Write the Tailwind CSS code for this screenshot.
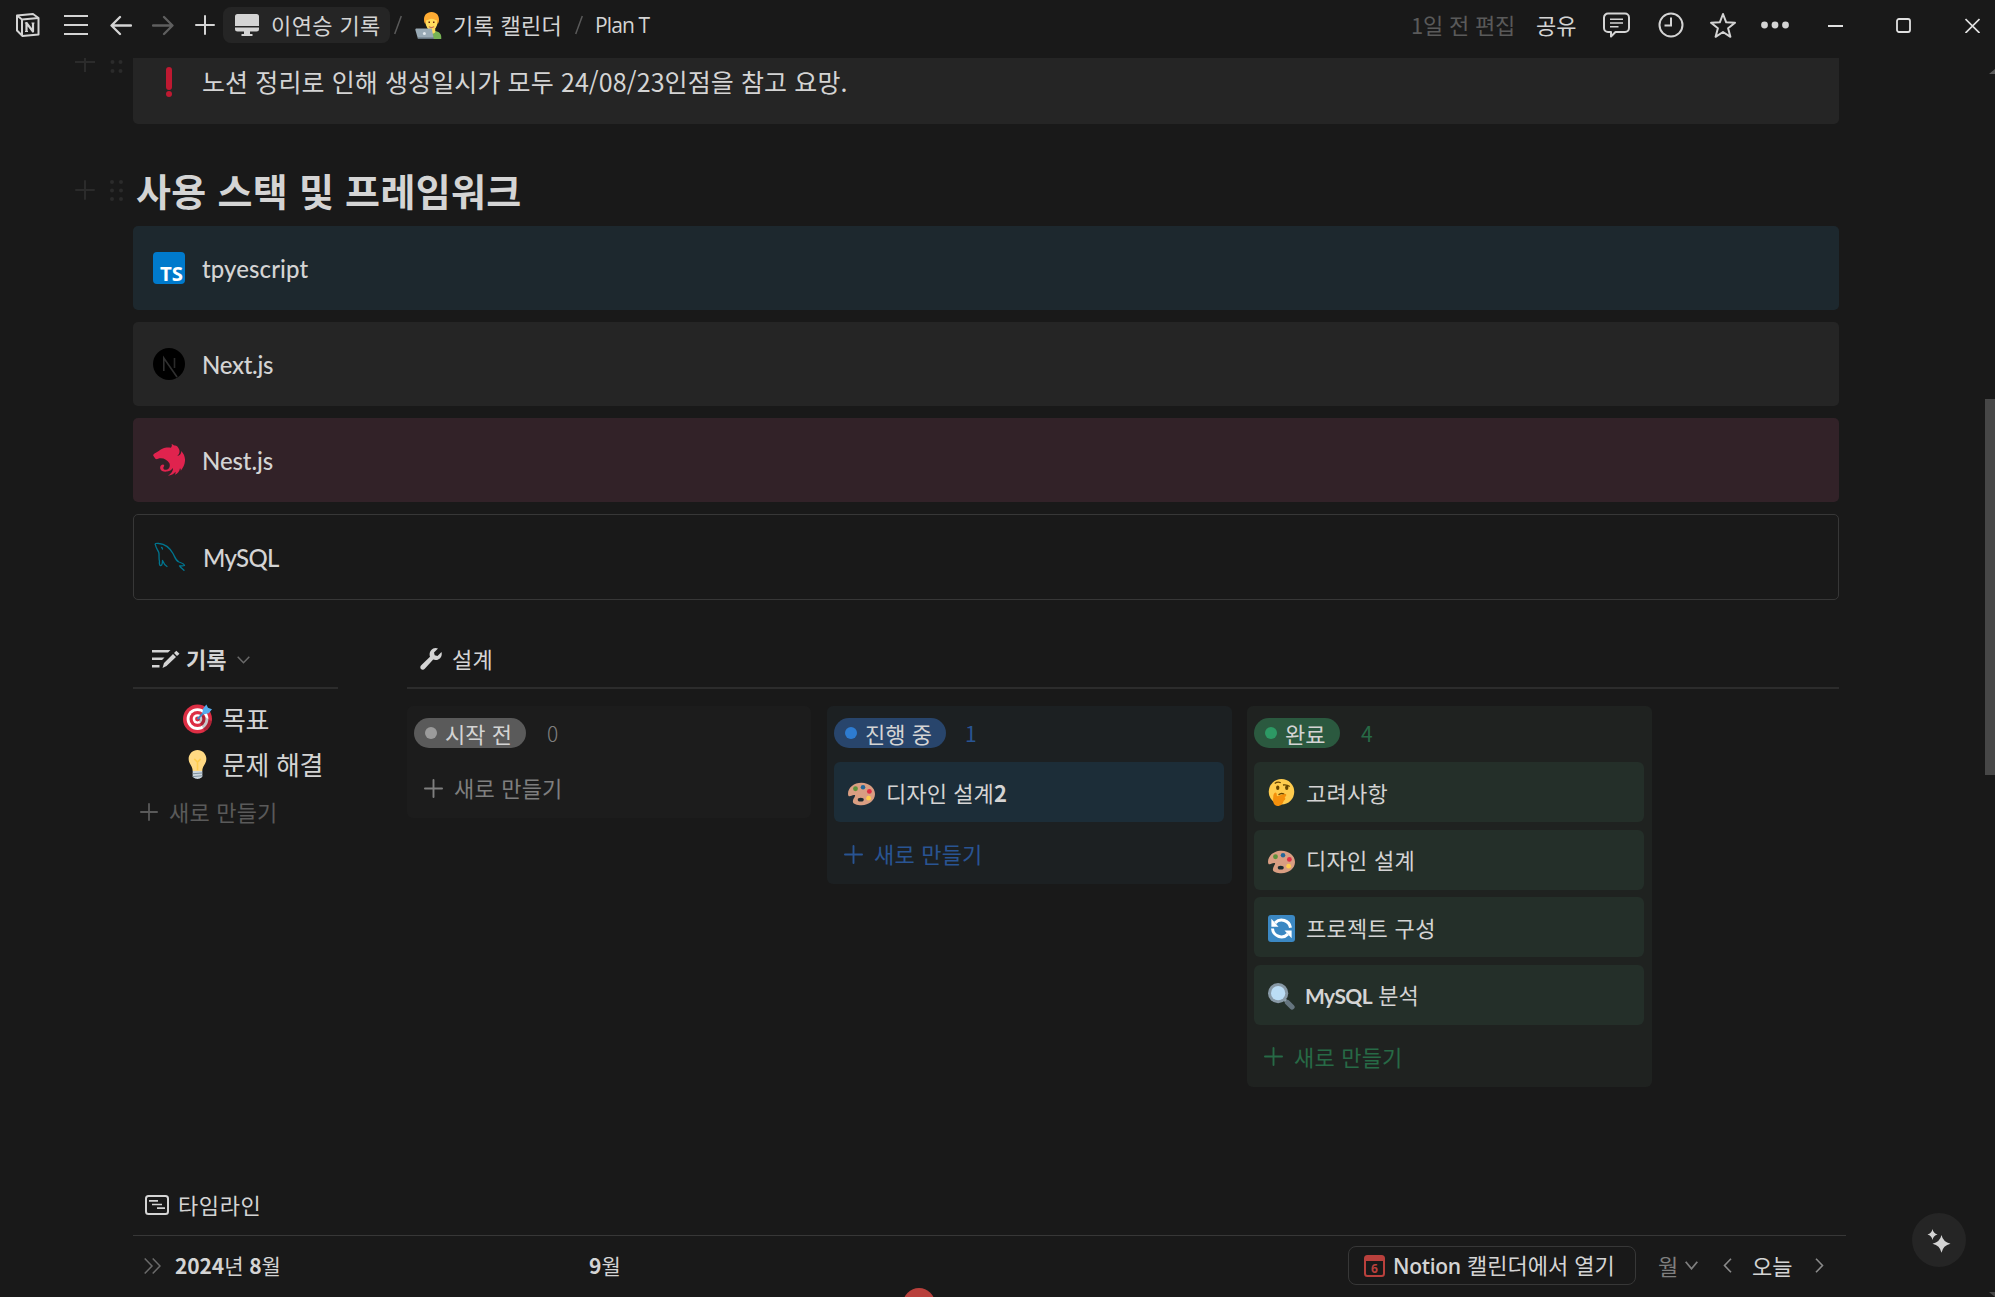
<!DOCTYPE html>
<html lang="ko">
<head>
<meta charset="utf-8">
<title>Plan T</title>
<script src="https://cdn.jsdelivr.net/npm/@tailwindcss/browser@4"></script>
</head>
<body class="relative h-[1297px] w-[1995px] overflow-hidden bg-[#191919] font-['Noto_Sans_CJK_KR',sans-serif] text-[22px] leading-none whitespace-nowrap text-[#d4d4d4]">
<svg class="hidden">
  <symbol id="plus" viewBox="0 0 20 20"><path d="M10 1v18M1 10h18" fill="none" stroke="currentColor" stroke-width="2" stroke-linecap="round"/></symbol>
  <symbol id="palette" viewBox="0 0 36 32"><path fill="#D99E82" d="M18 1C8 1 0 7.500 0 15.500c0 2 .8 3.500 2 3.500 2 0 4-2.200 7-1.600 2 .6-2.500 5-2.500 8.600C6.500 29.500 12 31 18 31c10 0 18-6.700 18-15S28 1 18 1z"/><ellipse cx="17" cy="23.500" rx="4" ry="2.600" fill="#1d2b2f"/><circle cx="10" cy="9" r="3.200" fill="#5C913B"/><circle cx="20" cy="7" r="3" fill="#226699"/><circle cx="28.500" cy="12.500" r="3.200" fill="#DD2E44"/><circle cx="27.500" cy="21.500" r="3.200" fill="#FFCC4D"/></symbol>
</svg>

<header class="flex h-[58px] items-start">
  <div class="flex h-[50px] w-full items-center">
    <svg class="ml-4 h-6 w-6" viewBox="0 0 24 24" fill="none" stroke="#d4d4d4" stroke-width="2" stroke-linejoin="round"><path d="M1 2.500L17 1l5.500 4v16.500L6.500 23 1 17.500z"/><path d="M1 2.500L6 6.500 22.500 5M6 6.500V22.500"/><path d="M10.500 18.500V10l6.500 8.500v-8.500" stroke-width="2.200"/><path d="M8.800 10h2.500M9 18.500h3M15.500 10h3" stroke-width="1.200"/></svg>
    <svg class="ml-6 h-6 w-6" viewBox="0 0 24 24" stroke="#d4d4d4" stroke-width="2"><path d="M0 3h24M0 12h24M0 21h24"/></svg>
    <svg class="ml-[22px] h-6 w-[22px]" viewBox="0 0 22 24" fill="none" stroke="#d4d4d4" stroke-width="2.300" stroke-linecap="round" stroke-linejoin="round"><path d="M10 4L1.500 12.500 10 21M2 12.500h19"/></svg>
    <svg class="ml-5 h-6 w-[22px]" viewBox="0 0 22 24" fill="none" stroke="#5f5f5f" stroke-width="2.300" stroke-linecap="round" stroke-linejoin="round"><path d="M12 4l8.500 8.500L12 21M20 12.500H1"/></svg>
    <svg class="ml-[21px] h-5 w-5"><use href="#plus" stroke-width="2.500"/></svg>
    <div class="ml-2 flex h-9 w-[167px] items-center rounded-lg bg-[#252525] pl-3">
      <svg class="h-6 w-6" viewBox="0 0 24 24" fill="#d4d4d4"><path d="M2.500 1h19A2.500 2.500 0 0124 3.500V13H0V3.500A2.500 2.500 0 012.500 1zM0 14.500h24v1.500a2.500 2.500 0 01-2.500 2.500H15V21h2.500v2h-11v-2H9v-2.500H2.500A2.500 2.500 0 010 16z"/></svg>
      <span class="ml-3 pb-0.5 tracking-[0.4px]">이연승 기록</span>
    </div>
    <svg class="ml-1 h-5 w-2" viewBox="0 0 8 20"><path d="M7.300 1L.7 19" stroke="#5a5a5a" stroke-width="1.500"/></svg>
    <svg class="ml-[13px] h-[27px] w-[27px]" viewBox="0 0 36 36"><path fill="#77B255" d="M14 36v-3c0-5 4-8 10-8s11 3 11 8v3z"/><path fill="#FFDC5D" d="M17 20h10v7c-3 3-7 3-10 0z"/><ellipse cx="22" cy="14" rx="8" ry="10" fill="#FFDC5D"/><path fill="#FFAC33" d="M22 0c-7 0-10 5-10 10 0 3 1 6 2 6l1-5c3 0 4-2 7-2s5 2 7 2l1 5c1 0 2-3 2-6 0-5-3-10-10-10z"/><path d="M19 12.500v2M25 12.500v2" stroke="#662113" stroke-width="2"/><path d="M18.500 19.500q3.500 2.500 7 0" fill="none" stroke="#C1694F" stroke-width="1.500"/><path fill="#99AAB5" d="M2 22h19c1 0 1.500.500 1.700 1.500L25 36H4L.5 24C.2 22.700 1 22 2 22z"/><path fill="#66757F" d="M4 34h21v2H4z"/><circle cx="12.500" cy="28.500" r="2" fill="#E1E8ED"/></svg>
    <span class="ml-[11px] w-[109px] pb-0.5 tracking-[0.3px]">기록 캘린더</span>
    <svg class="ml-[13px] h-5 w-2" viewBox="0 0 8 20"><path d="M7.300 1L.7 19" stroke="#5a5a5a" stroke-width="1.500"/></svg>
    <span class="ml-3 w-[60px] font-['Open_Sans',sans-serif] text-[21px] tracking-[-0.9px]">Plan T</span>
    <div class="ml-auto flex items-center">
      <span class="w-[102px] pb-0.5 tracking-[-0.2px] text-[#5a5a5a]">1일 전 편집</span>
      <span class="ml-[23px] w-[42px] pb-0.5">공유</span>
      <svg class="ml-[25px] h-[26px] w-[27px]" viewBox="0 0 27 26" fill="none" stroke="#d4d4d4" stroke-width="2"><path d="M5 1.500h17a4 4 0 014 4v10.500a4 4 0 01-4 4h-9.500L8 24.500V20H5a4 4 0 01-4-4V5.500a4 4 0 014-4z" stroke-linejoin="round"/><path d="M7 7.300h13M7 11h13M7 14.700h8.500" stroke-width="1.600"/></svg>
      <svg class="ml-[28px] h-[26px] w-[26px]" viewBox="0 0 26 26" fill="none" stroke="#d4d4d4" stroke-width="2"><circle cx="13" cy="13" r="11.500"/><path d="M13 5.500V13.500H6.500"/></svg>
      <svg class="ml-[25px] h-[27px] w-[28px]" viewBox="0 0 28 27" fill="none" stroke="#d4d4d4" stroke-width="2" stroke-linejoin="round"><path d="M14 2l3.200 8.300 8.800.5-6.900 5.500 2.300 8.500L14 20l-7.400 4.800 2.300-8.500L2 10.800l8.800-.5z"/></svg>
      <svg class="ml-6 h-7 w-7" viewBox="0 0 28 28" fill="#d4d4d4"><circle cx="3.500" cy="14" r="3.400"/><circle cx="14" cy="14" r="3.400"/><circle cx="24.500" cy="14" r="3.400"/></svg>
      <svg class="ml-[39px] h-4 w-[15px]" viewBox="0 0 15 16"><path d="M0 9h15" stroke="#e0e0e0" stroke-width="2"/></svg>
      <svg class="ml-[53px] h-4 w-[15px]" viewBox="0 0 15 16"><rect x="1" y="2" width="13" height="13" rx="2" fill="none" stroke="#e0e0e0" stroke-width="1.800"/></svg>
      <svg class="mr-[15px] ml-[54px] h-4 w-[15px]" viewBox="0 0 15 16"><path d="M.5 2l14 14M14.500 2L.5 16" stroke="#e0e0e0" stroke-width="1.700"/></svg>
    </div>
  </div>
</header>

<main class="flex">
  <aside class="w-[133px] shrink-0 text-[#2b2b2b]">
    <div class="flex h-[18px] items-start overflow-hidden pl-[75px]">
      <svg class="h-[15px] w-5" viewBox="0 0 20 15"><path d="M10 0v14M0 4h20" stroke="currentColor" stroke-width="2"/></svg>
      <svg class="ml-[15px] h-[15px] w-[14px]" viewBox="0 0 14 15" fill="currentColor"><circle cx="2.500" cy="4" r="2"/><circle cx="10.500" cy="4" r="2"/><circle cx="2.500" cy="13" r="2"/><circle cx="10.500" cy="13" r="2"/></svg>
    </div>
    <div class="mt-[104px] flex pl-[75px]">
      <svg class="h-5 w-5"><use href="#plus"/></svg>
      <svg class="ml-[15px] h-[22px] w-[14px]" viewBox="0 0 14 22" fill="currentColor"><circle cx="2" cy="2" r="2"/><circle cx="11" cy="2" r="2"/><circle cx="2" cy="10.500" r="2"/><circle cx="11" cy="10.500" r="2"/><circle cx="2" cy="19" r="2"/><circle cx="11" cy="19" r="2"/></svg>
    </div>
  </aside>

  <div class="w-[1713px]">
    <div class="w-[1706px]">
      <div class="flex h-[66px] rounded-b-[5px] bg-[#252525] pt-[9px] pl-5">
        <svg class="h-8 w-8" viewBox="0 0 32 32" fill="#BE1931"><rect x="13" y="0" width="6" height="23" rx="3"/><circle cx="16" cy="27" r="3"/></svg>
        <span class="ml-[17px] pt-0.5 text-[25px] tracking-[0.1px]">노션 정리로 인해 생성일시가 모두 24/08/23인점을 참고 요망.</span>
      </div>
      <h2 class="mt-[47px] h-[55px] pl-[3px] text-[38px] font-bold tracking-[0.3px]">사용 스택 및 프레임워크</h2>

      <div class="flex flex-col gap-3 font-['Lato',sans-serif] text-[24px] font-medium">
        <div class="flex h-[84px] items-center rounded-[5px] bg-[#1d282e] pl-5">
          <svg class="h-8 w-8" viewBox="0 0 32 32"><rect width="32" height="32" rx="4" fill="#007ACC"/><text x="7" y="28.500" font-family="Open Sans" font-weight="700" font-size="19" textLength="23" lengthAdjust="spacingAndGlyphs" fill="#fff">TS</text></svg>
          <span class="ml-[17px] pt-0.5 tracking-[0.1px]">tpyescript</span>
        </div>
        <div class="flex h-[84px] items-center rounded-[5px] bg-[#252525] pl-5">
          <svg class="h-8 w-8" viewBox="0 0 32 32"><circle cx="16" cy="16" r="16" fill="#000"/><path d="M10.800 23V10L24 29" fill="none" stroke="#303030" stroke-width="1.600"/><path d="M21.500 10v10" stroke="#2a2a2a" stroke-width="1.600"/></svg>
          <span class="ml-[17px] pt-0.5 tracking-[-0.3px]">Next.js</span>
        </div>
        <div class="flex h-[84px] items-center rounded-[5px] bg-[#322228] pl-5">
          <svg class="h-8 w-8" viewBox="0 0 32 32" fill="#E0234E"><path d="M18.500 0c.8 1.300.3 2.500-.6 3.800-2.500-.4-5.500-.5-8 .8C7 5.800 4.500 8.300 1.500 9.500-.2 10.500 0 12 .9 12.600c.7.800.8 1.800 2 2.400 1.200.5 2.500-.5 3.500-.7 4-.7 8 1.500 10 5 1 3 0 6-3 6.500-2.500.2-4-1.500-2.500-3.400.6-.7.300-1.700-.7-1.900-2.200 0-3.400 2-3 4 .6 2.700 4 3.500 6.800 3 3-.4 5-2 6-3.500.3 3-2 6-5 7.700 3-.2 6-2 7.500-4 .2 1 0 2-.5 3 2.500-1 4.500-3.500 5-6.500.7.500.8 1.500.8 2.500 2.500-3 4.500-7 4.200-11.500C31.800 12 30.500 9.500 28.300 7c.1 2.800-1.500 4.800-4.300 5 2-1.300 3-3.500 2.300-6.200C25.200 2.500 23.200 1.200 21.500 1.500c-1 0-1.800-1.200-3-1.500z"/></svg>
          <span class="ml-[17px] pt-0.5 tracking-[-0.1px]">Nest.js</span>
        </div>
        <div class="flex h-[86px] items-center rounded-[5px] border border-[#373737] pl-5">
          <svg class="h-8 w-8" viewBox="0 0 32 32" fill="none" stroke="#00758F" stroke-width="1.300" stroke-linejoin="round" stroke-linecap="round"><path d="M5.500 20.500C5 23 6 25 7 24.500s1.500-3 1.500-5c1 2.500 2 4.500 4.500 6M5.500 20.500c-1-3 0-6-.7-9C4 9 2 7.500 1.500 4 .5 2.500 2 2 5 2.500c6 .500 10.500 4 14 10 2 3.500 2.500 7 6 8.500 3 1 5 2 5.500 3.500-1 .6-3 .2-5 .3 1 1.700 2.500 2.700 4.500 4.500"/><path d="M7.500 6.500q1 .200 1 1.500"/></svg>
          <span class="ml-[17px] pt-0.5 tracking-[-0.7px]">MySQL</span>
        </div>
      </div>

      <div class="mt-11 flex h-[535px] justify-between">
        <section class="w-[205px]">
          <div class="flex h-[45px] items-start border-b-2 border-[#2c2c2c] pl-[19px]">
            <svg class="mt-1.5 h-[19px] w-7" viewBox="0 0 28 19" fill="#d4d4d4"><path d="M0 0h18.500l-2.500 2.500H0zM0 7.500h12.500L10 10H0zM0 15h7.500v2.500H0zM10.500 18l1.500-5L21 4l3 3-9.500 9zM22 3l2.300-2.300L27.500 3.800 25 6z"/></svg>
            <span class="mt-[3px] ml-1.5 font-bold">기록</span>
            <svg class="mt-3 ml-[11px] h-2 w-[13px]" viewBox="0 0 13 8"><path d="M.7.7l5.800 6 5.800-6" fill="none" stroke="#6a6a6a" stroke-width="1.500"/></svg>
          </div>
          <div class="flex h-[46px] items-center pt-1.5 pl-[50px]">
            <svg class="mt-2 h-[30px] w-[29px]" viewBox="0 0 36 36"><circle cx="18" cy="18" r="18" fill="#DD2E44"/><circle cx="18" cy="18" r="13.500" fill="#fff"/><circle cx="18" cy="18" r="10" fill="#DD2E44"/><circle cx="18" cy="18" r="6" fill="#fff"/><circle cx="18" cy="18" r="3" fill="#DD2E44"/><path d="M19 19l8 14a18 18 0 009-12L24 13z" fill="#000" opacity=".22"/><path d="M18 18l11-11" stroke="#3B88C3" stroke-width="2.500"/><path d="M24 11l1-6 4-5 2 4 5 2-4 5-6 1z" fill="#55ACEE"/></svg>
            <span class="mt-[7px] ml-[10px] text-[26px] tracking-[-0.3px]">목표</span>
          </div>
          <div class="flex h-[46px] items-center pt-1.5 pl-[50px]">
            <svg class="mt-[7px] h-[29px] w-[29px]" viewBox="0 0 36 36"><path fill="#FFD983" d="M29 11c0 7-5 8-5 15H12c0-7-5-8-5-15C7 5 12 0 18 0s11 5 11 11z"/><path d="M14 11l4 4 4-4M18 15v10" fill="none" stroke="#FFCC4D" stroke-width="2"/><path fill="#CCD6DD" d="M12 26h12v7c0 1-3 3-6 3s-6-2-6-3z"/><path d="M12 29.500l12-1M12 33l12-1" stroke="#7b8d9a" stroke-width="1.200"/></svg>
            <span class="mt-1.5 ml-[10px] text-[26px] tracking-[-0.4px]">문제 해결</span>
          </div>
          <div class="flex items-center pt-[19px] pl-[7px] text-[#5a5a5a]">
            <svg class="h-[18px] w-[18px]"><use href="#plus"/></svg><span class="ml-[11px] pb-0.5 tracking-[0.2px]">새로 만들기</span>
          </div>
        </section>

        <section class="w-[1432px]">
          <div class="flex h-[45px] items-start border-b-2 border-[#2c2c2c] pl-[13px]">
            <svg class="mt-1 h-[22px] w-[22px]" viewBox="0 0 22 22" fill="#d4d4d4"><path d="M15.500 0c1 0 2 .2 2.500.6L14 4.500l.7 2.800 2.800.7 4-4c1.200 4.500-2 8-6 8-.9 0-1.600-.1-2.300-.4L5 20.500c-1.200 1.500-3 1.500-4 .5s-1-2.800.5-4L10 8.800C8.500 4.500 11.500 0 15.500 0z"/></svg>
            <span class="mt-[3px] ml-[10px] tracking-[0.3px]">설계</span>
          </div>
          <div class="mt-[17px] flex items-start gap-4">
            <div class="h-[112px] w-[404px] rounded-md bg-[#1c1c1c] px-[7px] pt-3">
              <div class="flex items-center">
                <span class="flex h-[30px] w-[112px] items-center rounded-full bg-[#5a5a5a] pl-[11px]"><i class="mr-2 h-3 w-3 rounded-full bg-[#9b9b9b]"></i><span class="pb-px">시작 전</span></span>
                <span class="ml-[21px] text-[21px] font-light text-[#7f7f7f]">0</span>
              </div>
              <div class="mt-7 flex items-center pl-[10px] text-[#7f7f7f]"><svg class="h-[19px] w-[19px]"><use href="#plus"/></svg><span class="ml-[11px] pb-[3px] tracking-[0.2px]">새로 만들기</span></div>
            </div>
            <div class="h-[178px] w-[405px] rounded-md bg-[#1c2022] px-[7px] pt-3">
              <div class="flex items-center">
                <span class="flex h-[30px] w-[112px] items-center rounded-full bg-[#28456c] pl-[11px]"><i class="mr-2 h-3 w-3 rounded-full bg-[#2e7cd1]"></i><span class="pb-px">진행 중</span></span>
                <span class="ml-[19px] text-[21px] text-[#295493]">1</span>
              </div>
              <div class="mt-3.5 flex h-[60px] w-[390px] items-center rounded-md bg-[#1c2d38] pl-3.5"><svg class="mt-1 h-6 w-[27px]"><use href="#palette"/></svg><span class="ml-[11px] pb-px tracking-[0.1px]">디자인 설계<b>2</b></span></div>
              <div class="mt-5 flex items-center pl-[10px] text-[#295493]"><svg class="h-[19px] w-[19px]"><use href="#plus"/></svg><span class="ml-[11px] pb-0.5 tracking-[0.2px]">새로 만들기</span></div>
            </div>
            <div class="-ml-px h-[381px] w-[405px] rounded-md bg-[#1f2220] px-[7px] pt-3">
              <div class="flex items-center">
                <span class="flex h-[30px] w-[86px] items-center rounded-full bg-[#2b593f] pl-[11px]"><i class="mr-2 h-3 w-3 rounded-full bg-[#2d9964]"></i><span class="pb-px">완료</span></span>
                <span class="ml-[21px] text-[21px] text-[#276a46]">4</span>
              </div>
              <div class="mt-3.5 flex w-[390px] flex-col gap-[7.660px]">
                <div class="flex h-[60px] items-center rounded-md bg-[#242f29] pl-3.5"><svg class="h-[27px] w-[27px]" viewBox="0 0 36 36"><circle cx="18" cy="17" r="17" fill="#FFCC4D"/><ellipse cx="13" cy="11.500" rx="2.200" ry="3" fill="#664500"/><ellipse cx="25" cy="11.500" rx="2.200" ry="3" fill="#664500"/><path d="M9 6q4-3 8-1M20 8q5-1 9 2M14 21q5-4 9 1" fill="none" stroke="#664500" stroke-width="1.800"/><path fill="#F4900C" d="M7 24c0-3 1-6 3-6s1.500 3 2 5c4-1 9-3 11-3s2 3-1 4c2 2 1 4-1 5-1 4-4 7-8 7-5 0-7-5-6-12z"/></svg><span class="ml-[11px] pb-px tracking-[0.3px]">고려사항</span></div>
                <div class="flex h-[60px] items-center rounded-md bg-[#242f29] pl-3.5"><svg class="mt-1 h-6 w-[27px]"><use href="#palette"/></svg><span class="ml-[11px] pb-px tracking-[0.3px]">디자인 설계</span></div>
                <div class="flex h-[60px] items-center rounded-md bg-[#242f29] pl-3.5"><svg class="mt-[3px] h-[27px] w-[27px]" viewBox="0 0 36 36"><rect width="36" height="36" rx="4" fill="#3B88C3"/><path d="M9.500 10.500A12 12 0 0130 17M26.500 25.500A12 12 0 016 18" fill="none" stroke="#fff" stroke-width="4"/><path d="M4.500 5v10.500H14zM31.500 31V20.500H22z" fill="#fff"/></svg><span class="ml-[11px] pb-px tracking-[0.3px]">프로젝트 구성</span></div>
                <div class="flex h-[60px] items-center rounded-md bg-[#242f29] pl-3.5"><svg class="mt-[3px] h-[27px] w-[27px]" viewBox="0 0 36 36"><path d="M22 22l4 4" stroke="#9AAAB4" stroke-width="4"/><path d="M26 26l6 6" stroke="#66757F" stroke-width="7" stroke-linecap="round"/><circle cx="13.500" cy="13.500" r="13.500" fill="#8899A6"/><circle cx="13.500" cy="13.500" r="9.500" fill="#BBDDF5"/></svg><span class="ml-[10px]"><b class="font-['Lato',sans-serif] text-[21px] tracking-[-0.6px]">MySQL</b> 분석</span></div>
              </div>
              <div class="mt-5 flex items-center pl-[10px] text-[#276a46]"><svg class="h-[19px] w-[19px]"><use href="#plus"/></svg><span class="ml-[11px] pb-0.5 tracking-[0.2px]">새로 만들기</span></div>
            </div>
          </div>
        </section>
      </div>
    </div>

    <section>
      <div class="flex h-[57px] items-start border-b border-[#373737] pt-3.5 pl-3">
        <svg class="mt-0.5 h-5 w-6" viewBox="0 0 24 20" fill="none" stroke="#d4d4d4" stroke-width="2"><rect x="1" y="1" width="22" height="18" rx="2.500"/><path d="M4 5.800h9M7 9.500h10M12 13.200h8" stroke-width="1.700"/></svg>
        <span class="ml-[9px] tracking-[0.6px]">타임라인</span>
      </div>
      <div class="flex h-[59px] items-center">
        <svg class="ml-[11px] h-4 w-[17px]" viewBox="0 0 17 16" fill="none" stroke="#6a6a6a" stroke-width="1.500"><path d="M.7.500L8 8l-7.300 7.500M8.700.500L16 8l-7.300 7.500"/></svg>
        <span class="ml-3.5 w-[414px] pb-px text-[21px] tracking-[-0.1px]"><b>2024</b>년 <b>8</b>월</span>
        <span class="pb-px text-[21px]"><b>9</b>월</span>
        <div class="ml-auto flex items-center">
          <div class="flex h-[39px] w-[288px] items-center rounded-lg border border-[#373737] pl-[15px]">
            <svg class="h-[22px] w-[21px]" viewBox="0 0 21 22"><rect x="1" y="1" width="19" height="20" rx="2.500" fill="none" stroke="#b9403c" stroke-width="2"/><path d="M1 1h19v5H1z" fill="#b9403c"/><text x="10.500" y="17.500" text-anchor="middle" font-family="Open Sans" font-weight="700" font-size="12" fill="#b9403c">6</text></svg>
            <span class="ml-2 pb-px"><b class="font-['Open_Sans',sans-serif] text-[21px] font-semibold tracking-[-0.3px]">Notion</b> 캘린더에서 열기</span>
          </div>
          <span class="ml-[22px] w-5 pb-0.5 text-[#7f7f7f]">월</span>
          <svg class="ml-[7px] h-[9px] w-[13px]" viewBox="0 0 13 9"><path d="M.7.700l5.800 7 5.800-7" fill="none" stroke="#7f7f7f" stroke-width="1.800"/></svg>
          <svg class="ml-[25px] h-[15px] w-[9px]" viewBox="0 0 9 15"><path d="M8 .7L1.500 7.500 8 14.300" fill="none" stroke="#8a8a8a" stroke-width="1.600"/></svg>
          <span class="ml-5 w-[42px] pb-0.5">오늘</span>
          <svg class="mr-[22px] ml-[21px] h-[15px] w-[9px]" viewBox="0 0 9 15"><path d="M1 .7l6.500 6.800L1 14.300" fill="none" stroke="#8a8a8a" stroke-width="1.600"/></svg>
        </div>
      </div>
    </section>
  </div>
</main>

<div class="absolute top-[1288px] left-[903px] h-8 w-8 rounded-full bg-[#b9403c]"></div>
<button class="absolute top-[1213px] left-[1912px] flex h-[54px] w-[54px] items-center justify-center rounded-full bg-[#252525]"><svg class="mt-px h-6 w-6" viewBox="0 0 24 24" fill="#d4d4d4"><path d="M14.500 6q1.500 7 9 8.700-7.500 1.700-9 9-1.500-7.300-9-9 7.500-1.700 9-8.700zM5.500 0q.8 4.200 5 5.500-4.200 1.300-5 5.500-.8-4.200-5-5.500 4.200-1.300 5-5.500z"/></svg></button>
<div class="absolute top-[399px] left-[1985px] h-[376px] w-2.5 bg-[#474747]"></div>
<svg class="absolute top-[69px] left-[1989px] h-[5px] w-1.5" viewBox="0 0 6 5"><path d="M0 5l6-5v5z" fill="#5a5a5a"/></svg>
<svg class="absolute top-[1292px] left-[1989px] h-[5px] w-1.5" viewBox="0 0 6 5"><path d="M0 0h6v5z" fill="#474747"/></svg>
</body>
</html>
